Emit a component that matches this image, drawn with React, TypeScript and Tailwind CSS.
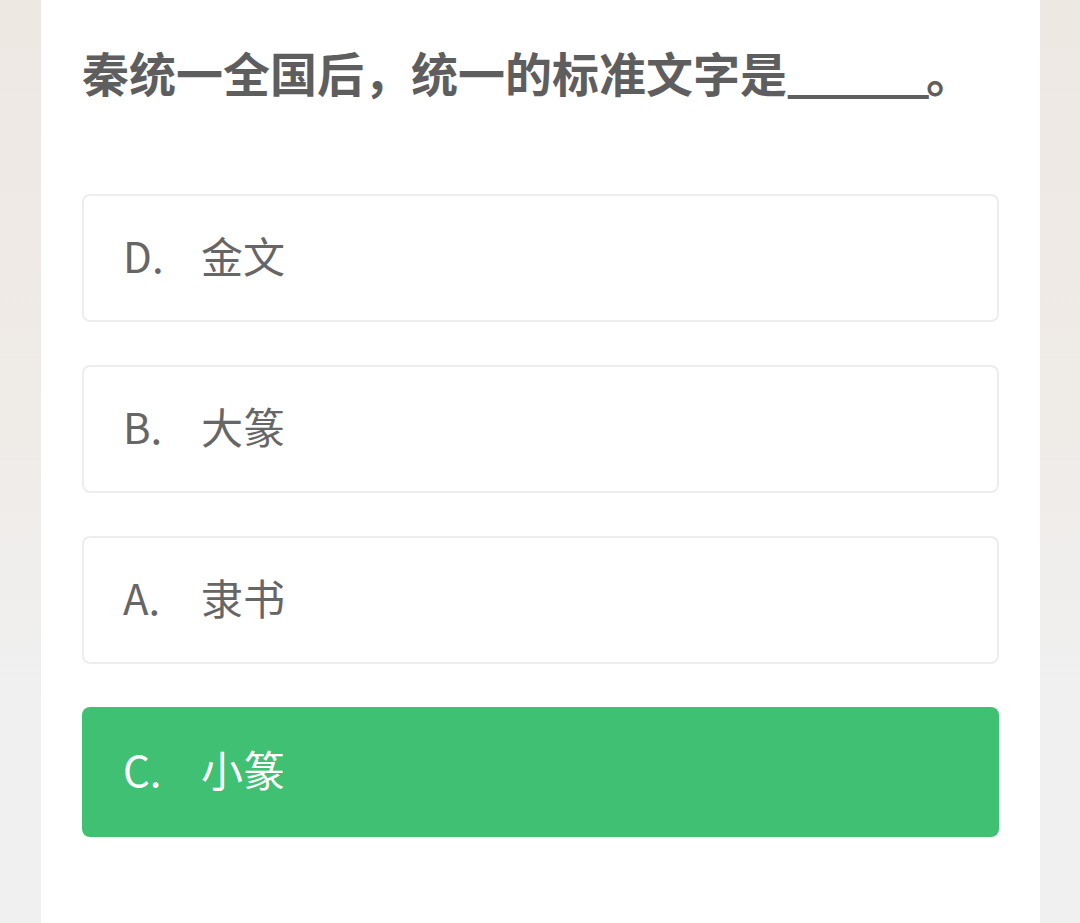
import React from "react";

const options = [
  { k: "D.", t: "金文", active: false },
  { k: "B.", t: "大篆", active: false },
  { k: "A.", t: "隶书", active: false },
  { k: "C.", t: "小篆", active: true },
];

export default function App() {
  return (
    <div
      className="w-[1080px] h-[923px] flex overflow-hidden bg-[linear-gradient(180deg,#eee8e3_0%,#efebe7_45%,#f0f0f0_75%,#f0f0f0_100%)]"
      style={{ fontFamily: '"Noto Sans CJK SC", "Noto Sans", sans-serif' }}
    >
      <div className="w-[41px] shrink-0" />
      <div className="w-[999px] h-full bg-white px-[41px] pt-[39px]">
        <div className="text-[47px] leading-[66px] font-bold text-[#5e5e5e] whitespace-nowrap">
          秦统一全国后，统一的标准文字是<span className="tracking-[-3.5px]">______</span>。
        </div>
        <div className="mt-[89px] flex flex-col gap-[43px]">
          {options.map((o) => (
            <div
              key={o.k}
              className={
                o.active
                  ? "h-[130px] rounded-[8px] bg-[#3fc073] flex items-center pl-[41px] pb-[6px] text-white"
                  : "h-[128px] rounded-[8px] border-2 border-[#ededed] bg-white flex items-center pl-[39px] pb-[6px] text-[#666666]"
              }
            >
              <span className="w-[78px] text-[42px] leading-none">{o.k}</span>
              <span className="text-[42px] leading-none">{o.t}</span>
            </div>
          ))}
        </div>
      </div>
    </div>
  );
}
